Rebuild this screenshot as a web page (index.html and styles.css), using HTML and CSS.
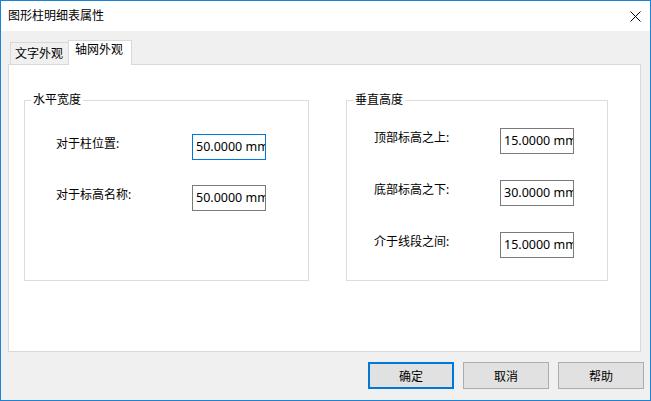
FILE: index.html
```html
<!DOCTYPE html>
<html lang="zh-CN">
<head>
<meta charset="utf-8">
<title>图形柱明细表属性</title>
<link rel="stylesheet" href="styles.css">
</head>
<body>
<div class="window">
  <div class="titlebar">
    <span class="title">图形柱明细表属性</span>
    <svg class="close" width="11" height="11" viewBox="0 0 11 11"><path d="M0.5 0.5 L10.5 10.5 M10.5 0.5 L0.5 10.5" stroke="#000" stroke-width="1" fill="none"/></svg>
  </div>
  <div class="body">
    <div class="tabs">
      <div class="tab">文字外观</div>
      <div class="tab active">轴网外观</div>
    </div>
    <div class="panel">
      <div class="groups">
        <fieldset class="group group-left">
          <legend>水平宽度</legend>
          <div class="group-body left-body">
            <div class="row"><span class="label lw">对于柱位置:</span><div class="field focus">50.0000 mm</div></div>
            <div class="row"><span class="label lw">对于标高名称:</span><div class="field">50.0000 mm</div></div>
          </div>
        </fieldset>
        <fieldset class="group group-right">
          <legend>垂直高度</legend>
          <div class="group-body right-body">
            <div class="row"><span class="label rw">顶部标高之上:</span><div class="field">15.0000 mm</div></div>
            <div class="row"><span class="label rw">底部标高之下:</span><div class="field">30.0000 mm</div></div>
            <div class="row"><span class="label rw">介于线段之间:</span><div class="field">15.0000 mm</div></div>
          </div>
        </fieldset>
      </div>
    </div>
    <div class="footer">
      <button class="btn default">确定</button>
      <button class="btn">取消</button>
      <button class="btn">帮助</button>
    </div>
  </div>
</div>
</body>
</html>
```
FILE: styles.css
```css
* { box-sizing: border-box; }
html, body { margin: 0; padding: 0; }
body {
  font-family: "Noto Sans", "Noto Sans CJK SC", sans-serif;
  font-size: 12px;
  color: #000;
  background: #f0f0f0;
}
.window {
  width: 651px;
  height: 401px;
  border: 1px solid #1883d7;
  display: flex;
  flex-direction: column;
  background: #f0f0f0;
}
.titlebar {
  height: 30px;
  background: #fff;
  display: flex;
  align-items: center;
  justify-content: space-between;
  padding: 0 9px 0 7px;
}
.title { line-height: 16px; }
.close { display: block; }
.body {
  flex: 1;
  padding: 9px 6px 0 7px;
  display: flex;
  flex-direction: column;
}
.tabs {
  display: flex;
  align-items: flex-end;
  height: 24px;
  padding-left: 2px;
  position: relative;
  z-index: 1;
}
.tab {
  height: 22px;
  width: 58px;
  line-height: 17px;
  padding: 2px 0 0 4px;
  border: 1px solid #d9d9d9;
  border-bottom: none;
  border-right: none;
  background: #f0f0f0;
}
.tab.active {
  height: 25px;
  width: 64px;
  margin-bottom: -1px;
  padding: 0 0 0 6px;
  border-right: 1px solid #d9d9d9;
  background: #fff;
}
.panel {
  height: 288px;
  margin-right: 3px;
  border: 1px solid #d9d9d9;
  background: #fff;
}
.groups {
  display: flex;
  padding-left: 15px;
  gap: 37px;
}
.group {
  margin: 27px 0 0 0;
  padding: 0;
  border: 1px solid #dcdcdc;
  min-width: 0;
}
.group legend {
  margin-left: 6px;
  padding: 0 2px;
  line-height: 16px;
}
.group-left { width: 285px; }
.group-right { width: 262px; }
.group-body {
  height: 172px;
  display: flex;
  flex-direction: column;
}
.left-body { padding: 26px 0 0 31px; gap: 25px; }
.right-body { padding: 20px 0 0 27px; gap: 26px; }
.row {
  display: flex;
  align-items: flex-start;
}
.label {
  line-height: 17px;
  padding-top: 1px;
}
.lw { width: 136px; }
.rw { width: 126px; }
.field {
  width: 74px;
  height: 26px;
  border: 1px solid #7a7a7a;
  background: #fff;
  padding-left: 3px;
  line-height: 24px;
  white-space: nowrap;
  overflow: hidden;
  font-size: 12.5px;
}
.field.focus { border-color: #0078d7; }
.footer {
  display: flex;
  justify-content: flex-end;
  gap: 9px;
  margin-top: 10px;
}
.btn {
  width: 86px;
  height: 27px;
  border: 1px solid #adadad;
  background: #e1e1e1;
  font: inherit;
  color: #000;
  padding: 0;
}
.btn.default { border: 2px solid #0078d7; }
```
